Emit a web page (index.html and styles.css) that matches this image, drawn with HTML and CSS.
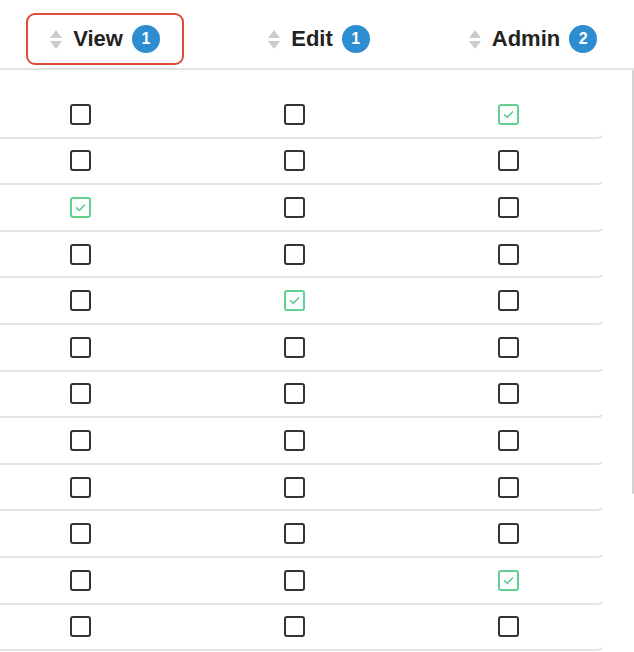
FILE: index.html
```html
<!DOCTYPE html>
<html lang="en">
<head>
    <meta charset="UTF-8">
    <title>Permissions</title>
    <link rel="stylesheet" href="styles.css">
</head>
<body>
    <div class="table">
        <!-- Column headers -->
        <div class="head">
            <div class="head-row">
                <div class="head-cell">
                    <div class="head-inner highlighted">
                        <span class="sort"><span class="sort-up"></span><span class="sort-down"></span></span>
                        <span class="head-label">View</span>
                        <span class="badge">1</span>
                    </div>
                </div>
                <div class="head-cell">
                    <div class="head-inner">
                        <span class="sort"><span class="sort-up"></span><span class="sort-down"></span></span>
                        <span class="head-label">Edit</span>
                        <span class="badge">1</span>
                    </div>
                </div>
                <div class="head-cell">
                    <div class="head-inner">
                        <span class="sort"><span class="sort-up"></span><span class="sort-down"></span></span>
                        <span class="head-label">Admin</span>
                        <span class="badge">2</span>
                    </div>
                </div>
            </div>
        </div>

        <!-- Rows -->
        <div class="rows">
            <div class="row">
                <div class="cell"><span class="box"></span></div>
                <div class="cell"><span class="box"></span></div>
                <div class="cell"><span class="box checked"><svg viewBox="0 0 17 17"><path d="M4.5 8.8 L7.3 11.3 L12.5 6"/></svg></span></div>
            </div>
            <div class="row">
                <div class="cell"><span class="box"></span></div>
                <div class="cell"><span class="box"></span></div>
                <div class="cell"><span class="box"></span></div>
            </div>
            <div class="row">
                <div class="cell"><span class="box checked"><svg viewBox="0 0 17 17"><path d="M4.5 8.8 L7.3 11.3 L12.5 6"/></svg></span></div>
                <div class="cell"><span class="box"></span></div>
                <div class="cell"><span class="box"></span></div>
            </div>
            <div class="row">
                <div class="cell"><span class="box"></span></div>
                <div class="cell"><span class="box"></span></div>
                <div class="cell"><span class="box"></span></div>
            </div>
            <div class="row">
                <div class="cell"><span class="box"></span></div>
                <div class="cell"><span class="box checked"><svg viewBox="0 0 17 17"><path d="M4.5 8.8 L7.3 11.3 L12.5 6"/></svg></span></div>
                <div class="cell"><span class="box"></span></div>
            </div>
            <div class="row">
                <div class="cell"><span class="box"></span></div>
                <div class="cell"><span class="box"></span></div>
                <div class="cell"><span class="box"></span></div>
            </div>
            <div class="row">
                <div class="cell"><span class="box"></span></div>
                <div class="cell"><span class="box"></span></div>
                <div class="cell"><span class="box"></span></div>
            </div>
            <div class="row">
                <div class="cell"><span class="box"></span></div>
                <div class="cell"><span class="box"></span></div>
                <div class="cell"><span class="box"></span></div>
            </div>
            <div class="row">
                <div class="cell"><span class="box"></span></div>
                <div class="cell"><span class="box"></span></div>
                <div class="cell"><span class="box"></span></div>
            </div>
            <div class="row">
                <div class="cell"><span class="box"></span></div>
                <div class="cell"><span class="box"></span></div>
                <div class="cell"><span class="box"></span></div>
            </div>
            <div class="row">
                <div class="cell"><span class="box"></span></div>
                <div class="cell"><span class="box"></span></div>
                <div class="cell"><span class="box checked"><svg viewBox="0 0 17 17"><path d="M4.5 8.8 L7.3 11.3 L12.5 6"/></svg></span></div>
            </div>
            <div class="row">
                <div class="cell"><span class="box"></span></div>
                <div class="cell"><span class="box"></span></div>
                <div class="cell"><span class="box"></span></div>
            </div>
        </div>

        <!-- Scrollbar thumb -->
        <div class="scroll-thumb"></div>
    </div>
</body>
</html>
```

FILE: styles.css
```css
/* Permission table */
html, body {
    margin: 0;
    padding: 0;
    background-color: #fff;
    font-family: "Liberation Sans", Arial, sans-serif;
    color: #222;
}

body {
    overflow: hidden;
}

.table {
    position: relative;
    width: 634px;
    height: 652px;
    overflow: hidden;
}

/* Header */
.head {
    box-sizing: border-box;
    height: 70px;
    padding-top: 10px;
    border-bottom: 2px solid #e3e3e3;
}

.head-row {
    display: grid;
    grid-template-columns: repeat(3, 214px);
    margin-left: -2px;
    height: 58px;
    align-items: center;
}

.head-cell {
    display: flex;
    justify-content: center;
}

.head-inner {
    display: flex;
    align-items: center;
    padding: 10px 22px;
    border: 2.5px solid transparent;
    border-radius: 9px;
}

.head-inner.highlighted {
    border-color: #dd4b3a;
}

.sort {
    display: flex;
    flex-direction: column;
    gap: 3px;
    margin-right: 11px;
}

.sort-up,
.sort-down {
    width: 0;
    height: 0;
    border-left: 6px solid transparent;
    border-right: 6px solid transparent;
}

.sort-up {
    border-bottom: 8px solid #cbcbcb;
}

.sort-down {
    border-top: 8px solid #cbcbcb;
}

.head-label {
    font-size: 22px;
    font-weight: bold;
    line-height: 28px;
}

.badge {
    display: flex;
    align-items: center;
    justify-content: center;
    width: 28px;
    height: 28px;
    margin-left: 9px;
    border-radius: 50%;
    background-color: #2e8dd0;
    color: #fff;
    font-size: 16px;
    font-weight: bold;
}

/* Rows */
.rows {
    padding-top: 22px;
}

.row {
    box-sizing: border-box;
    display: grid;
    grid-template-columns: repeat(3, 214px);
    width: 632px;
    height: 46.6px;
    margin-left: -27px;
    align-items: center;
    justify-items: center;
    border-bottom: 2px solid #e4e4e4;
    border-right: 2px solid transparent;
    border-bottom-right-radius: 8px;
}

.cell {
    display: flex;
}

.box {
    box-sizing: border-box;
    display: block;
    width: 21px;
    height: 21px;
    border: 2px solid #333;
    border-radius: 3px;
    background-color: #fff;
}

.box.checked {
    border-color: #62d091;
}

.box svg {
    display: block;
    width: 17px;
    height: 17px;
}

.box svg path {
    fill: none;
    stroke: #62d091;
    stroke-width: 1.7;
    stroke-linecap: round;
    stroke-linejoin: round;
}

.scroll-thumb {
    position: absolute;
    top: 70px;
    right: 0;
    width: 2px;
    height: 424px;
    border-radius: 1px;
    background-color: #d2d2d2;
}
```
